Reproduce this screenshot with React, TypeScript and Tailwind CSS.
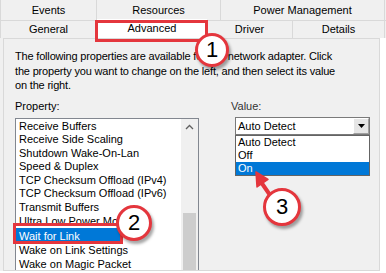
import React from "react";

const items = [
  "Receive Buffers",
  "Receive Side Scaling",
  "Shutdown Wake-On-Lan",
  "Speed & Duplex",
  "TCP Checksum Offload (IPv4)",
  "TCP Checksum Offload (IPv6)",
  "Transmit Buffers",
  "Ultra Low Power Mode",
  "Wait for Link",
  "Wake on Link Settings",
  "Wake on Magic Packet",
];

function Badge({ n, cls }: { n: string; cls: string }) {
  return (
    <div
      className={
        "absolute rounded-full bg-white border-[3px] border-[#e4363d] shadow-[2px_3px_3px_rgba(0,0,0,0.35)] flex items-center justify-center text-[22px] leading-none text-black " +
        cls
      }
    >
      {n}
    </div>
  );
}

export default function App() {
  return (
    <div
      className="relative w-[386px] h-[273px] overflow-hidden bg-white text-[11px] text-black"
      style={{ fontFamily: '"Liberation Sans", Arial, sans-serif' }}
    >
      {/* tab row 1 */}
      <div className="flex h-[21px] bg-[#f0f0f0] border-b border-[#d9d9d9]">
        <div className="w-[97px] border-l border-r border-[#d9d9d9] flex items-center justify-center">Events</div>
        <div className="w-[124px] border-r border-[#d9d9d9] flex items-center justify-center">Resources</div>
        <div className="w-[164px] border-r border-[#d9d9d9] flex items-center justify-center">Power Management</div>
      </div>
      {/* tab row 2 */}
      <div className="flex h-[17px] bg-[#f0f0f0]">
        <div className="w-[97px] border-l border-r border-[#d9d9d9] flex items-center justify-center">General</div>
        <div className="relative z-10 w-[110px] h-[19px] -mt-[2px] bg-white flex items-center justify-center pb-[1px]">Advanced</div>
        <div className="w-[86px] border-r border-[#d9d9d9] flex items-center justify-center">Driver</div>
        <div className="w-[92px] border-r border-[#d9d9d9] flex items-center justify-center">Details</div>
      </div>
      {/* body */}
      <div className="flex">
        <div className="w-[3px] h-[233px] bg-[#f0f0f0]" />
        <div className="w-[377px] h-[233px] border border-[#d9d9d9] bg-[#f0f0f0] overflow-hidden pl-[11px] pt-[10px]">
          <div className="leading-[14.5px] whitespace-nowrap tracking-[-0.18px]">
            The following properties are available for this network adapter. Click
            <br />
            the property you want to change on the left, and then select its value
            <br />
            on the right.
          </div>
          <div className="flex mt-[6px]">
            <div className="w-[184px]">
              <div className="leading-[14px]">Property:</div>
              <div className="mt-[5px] w-[184px] h-[160px] border border-[#828790] bg-white flex">
                <div className="flex-1 pt-[1px] pl-[3px]">
                  {items.map((t) =>
                    t === "Wait for Link" ? (
                      <div
                        key={t}
                        className="-ml-[3px] pl-[3px] w-[105px] h-[16px] leading-[16px] bg-[#0078d7] text-white whitespace-nowrap"
                      >
                        {t}
                      </div>
                    ) : (
                      <div key={t} className="h-[13.6px] leading-[13.6px] whitespace-nowrap">
                        {t}
                      </div>
                    )
                  )}
                </div>
                <div className="w-[17px] bg-[#f0f0f0] flex flex-col">
                  <div className="h-[17px] flex items-center justify-center">
                    <svg width="9" height="6" viewBox="0 0 9 6">
                      <path d="M1 5 L4.5 1.5 L8 5" fill="none" stroke="#606060" strokeWidth="1.3" />
                    </svg>
                  </div>
                  <div className="h-[77px]" />
                  <div className="mx-[2px] flex-1 bg-[#cdcdcd]" />
                </div>
              </div>
            </div>
            <div className="ml-[32px]">
              <div className="leading-[14px] text-[#333]">Value:</div>
              <div className="relative mt-[4px] ml-[4px] w-[135px]">
                <div className="h-[18px] border border-[#7a7a7a] bg-white flex items-center">
                  <div className="flex-1 pl-[2px] leading-[14px]">Auto Detect</div>
                  <div className="w-[16px] h-[16px] bg-[#e6e6e6] border-l border-t border-white border-r-[#a0a0a0] border-b-[#a0a0a0] border-r border-b flex items-center justify-center">
                    <svg width="7" height="4" viewBox="0 0 7 4">
                      <path d="M0 0 L7 0 L3.5 4 Z" fill="#000" />
                    </svg>
                  </div>
                </div>
                <div className="border border-[#646464] bg-white">
                  <div className="h-[13px] leading-[13px] pl-[2px]">Auto Detect</div>
                  <div className="h-[13px] leading-[13px] pl-[2px]">Off</div>
                  <div className="h-[13px] leading-[13px] pl-[2px] bg-[#0078d7] text-white">On</div>
                </div>
              </div>
            </div>
          </div>
        </div>
      </div>

      {/* annotations */}
      <div className="absolute left-[95px] top-[20px] w-[113px] h-[22px] border-[3px] border-[#e4363d] z-20" />
      <div className="absolute left-[13px] top-[223px] w-[110px] h-[21px] border-[3px] border-[#e4363d] z-20" />
      <Badge n="1" cls="left-[195px] top-[33px] w-[34px] h-[34px] z-30" />
      <Badge n="2" cls="left-[116px] top-[205px] w-[36px] h-[36px] z-30" />
      <svg className="absolute left-[248px] top-[168px] z-20" width="34" height="34" viewBox="0 0 34 34">
        <path d="M13 14 L24 30" stroke="#e4363d" strokeWidth="4" strokeLinecap="round" />
        <path d="M8 4 L9 19 L20 11.5 Z" fill="#e4363d" stroke="#e4363d" strokeWidth="1.5" strokeLinejoin="round" />
      </svg>
      <Badge n="3" cls="left-[263px] top-[188px] w-[38px] h-[38px] z-30" />
    </div>
  );
}
